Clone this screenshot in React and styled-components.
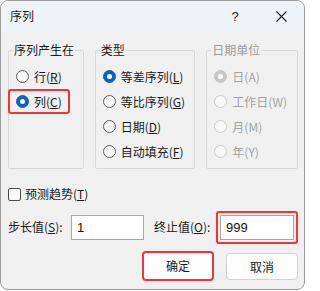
import React from "react";
import styled, { createGlobalStyle } from "styled-components";

const GlobalStyle = createGlobalStyle`
  html, body {
    margin: 0;
    padding: 0;
    background: #ffffff;
  }
  body {
    font-family: "Noto Sans CJK SC", "Noto Sans", sans-serif;
    font-size: 12px;
    color: #1a1a1a;
  }
`;

const Window = styled.div`
  width: 305px;
  height: 290px;
  box-sizing: border-box;
  border: 1px solid #9a9a9a;
  border-radius: 8px;
  overflow: hidden;
  background: #f0f0f0;
  display: flex;
  flex-direction: column;
`;

const TitleBar = styled.div`
  height: 30px;
  flex: none;
  background: #eef3f7;
  display: flex;
  align-items: center;
  padding-left: 9px;
`;

const Title = styled.div`
  flex: 1;
  font-size: 12px;
  line-height: 16px;
`;

const TitleButton = styled.div`
  width: 46px;
  height: 30px;
  display: flex;
  align-items: center;
  justify-content: center;
  font-family: "Liberation Sans", sans-serif;
  font-size: 13px;
  color: #222;
`;

const Content = styled.div`
  padding: 11px 6px 0 7px;
  display: flex;
  flex-direction: column;
`;

const GroupsRow = styled.div`
  display: flex;
  gap: 11px;
`;

const Group = styled.fieldset`
  margin: 0;
  width: ${(p) => p.$width}px;
  height: 127px;
  box-sizing: border-box;
  border: 1px solid #d8d8d8;
  border-radius: 2px;
  padding: 6px 0 0 7px;
  display: flex;
  flex-direction: column;
`;

const Legend = styled.legend`
  padding: 0 1px;
  margin-left: -3px;
  font-size: 12px;
  line-height: 16px;
  color: ${(p) => (p.$disabled ? "#9b9b9b" : "#1a1a1a")};
`;

const OptionRow = styled.label`
  display: flex;
  align-items: center;
  gap: 5px;
  height: 25px;
  width: fit-content;
  box-sizing: border-box;
  font-size: 12px;
  line-height: 16px;
  color: ${(p) => (p.$disabled ? "#a3a3a3" : "#1a1a1a")};
  ${(p) =>
    p.$marked &&
    `
    border: 2px solid #e8383b;
    border-radius: 3px;
    margin-left: -8px;
    padding: 0 6px;
  `}
`;

const RadioDot = styled.span`
  width: 13px;
  height: 13px;
  box-sizing: border-box;
  border-radius: 50%;
  flex: none;
  display: flex;
  align-items: center;
  justify-content: center;
  background: ${(p) =>
    p.$checked ? (p.$disabled ? "#c6c6c6" : "#0a63c0") : "#f8f8f8"};
  border: 1px solid
    ${(p) =>
      p.$checked ? (p.$disabled ? "#c6c6c6" : "#0a63c0") : p.$disabled ? "#cbcbcb" : "#5c5c5c"};

  &::after {
    content: "";
    display: ${(p) => (p.$checked ? "block" : "none")};
    width: 5px;
    height: 5px;
    border-radius: 50%;
    background: #ffffff;
  }
`;

const CheckRow = styled.label`
  display: flex;
  align-items: center;
  gap: 4px;
  margin-top: 17px;
  height: 16px;
  font-size: 12px;
  line-height: 16px;
`;

const CheckBox = styled.span`
  width: 13px;
  height: 13px;
  box-sizing: border-box;
  border: 1px solid #4a4a4a;
  border-radius: 2px;
  background: #f8f8f8;
  flex: none;
`;

const FieldRow = styled.div`
  display: flex;
  align-items: center;
  margin-top: 8px;
  height: 34px;
`;

const FieldLabel = styled.span`
  font-size: 12px;
  line-height: 16px;
  width: ${(p) => p.$width}px;
  flex: none;
`;

const Input = styled.div`
  width: ${(p) => p.$width}px;
  height: 25px;
  box-sizing: border-box;
  border: 1px solid #a6a6a6;
  background: #ffffff;
  padding: 4px 5px 0;
  font-family: "Liberation Sans", sans-serif;
  font-size: 13px;
  line-height: 16px;
  color: #111;
`;

const Highlight = styled.div`
  border: 2px solid #e8383b;
  border-radius: 3px;
  padding: 2px;
`;

const Spacer = styled.div`
  width: ${(p) => p.$width}px;
  flex: none;
`;

const ButtonRow = styled.div`
  display: flex;
  justify-content: flex-end;
  gap: 12px;
  margin-top: 7px;
`;

const Button = styled.div`
  width: 72px;
  height: ${(p) => (p.$marked ? 30 : 27)}px;
  margin-top: ${(p) => (p.$marked ? 0 : 2)}px;
  box-sizing: border-box;
  border: ${(p) => (p.$marked ? "2px solid #e8383b" : "1px solid #d2d2d2")};
  border-radius: 4px;
  background: #fdfdfd;
  display: flex;
  align-items: center;
  justify-content: center;
  font-size: 12px;
  line-height: 16px;
`;

const Option = ({ label, keyChar, checked, disabled, marked }) => (
  <OptionRow $disabled={disabled} $marked={marked}>
    <RadioDot $checked={checked} $disabled={disabled} />
    <span>
      {label}({disabled ? keyChar : <u>{keyChar}</u>})
    </span>
  </OptionRow>
);

export default function App() {
  return (
    <>
      <GlobalStyle />
      <Window>
        <TitleBar>
          <Title>序列</Title>
          <TitleButton>?</TitleButton>
          <TitleButton>
            <svg width="11" height="11" viewBox="0 0 11 11">
              <path d="M0.5 0.5 L10.5 10.5 M10.5 0.5 L0.5 10.5" stroke="#222" strokeWidth="1.1" />
            </svg>
          </TitleButton>
        </TitleBar>
        <Content>
          <GroupsRow>
            <Group $width={76}>
              <Legend>序列产生在</Legend>
              <Option label="行" keyChar="R" />
              <Option label="列" keyChar="C" checked marked />
            </Group>
            <Group $width={101}>
              <Legend>类型</Legend>
              <Option label="等差序列" keyChar="L" checked />
              <Option label="等比序列" keyChar="G" />
              <Option label="日期" keyChar="D" />
              <Option label="自动填充" keyChar="F" />
            </Group>
            <Group $width={92}>
              <Legend $disabled>日期单位</Legend>
              <Option label="日" keyChar="A" checked disabled />
              <Option label="工作日" keyChar="W" disabled />
              <Option label="月" keyChar="M" disabled />
              <Option label="年" keyChar="Y" disabled />
            </Group>
          </GroupsRow>
          <CheckRow>
            <CheckBox />
            <span>
              预测趋势(<u>T</u>)
            </span>
          </CheckRow>
          <FieldRow>
            <FieldLabel $width={63}>
              步长值(<u>S</u>):
            </FieldLabel>
            <Input $width={77}>1</Input>
            <Spacer $width={10} />
            <FieldLabel $width={62}>
              终止值(<u>O</u>):
            </FieldLabel>
            <Highlight>
              <Input $width={74}>999</Input>
            </Highlight>
          </FieldRow>
          <ButtonRow>
            <Button $marked>确定</Button>
            <Button>取消</Button>
          </ButtonRow>
        </Content>
      </Window>
    </>
  );
}
